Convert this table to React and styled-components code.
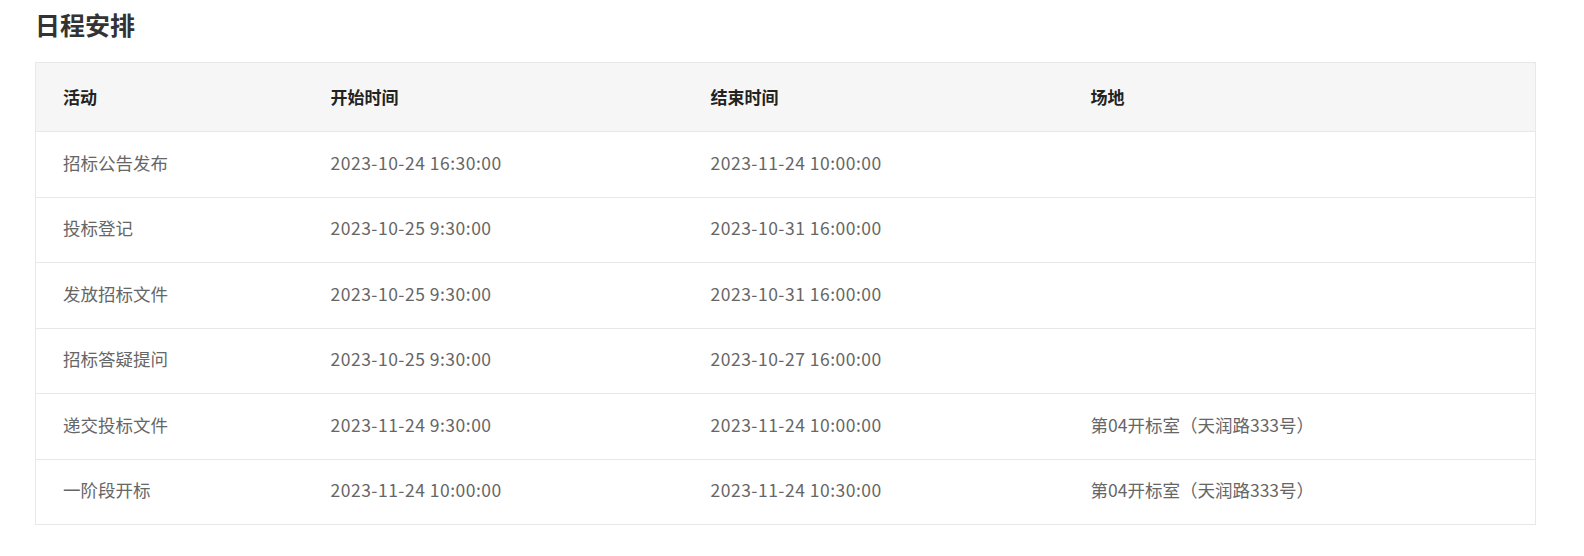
import React from "react";
import styled, { createGlobalStyle } from "styled-components";

const GlobalStyle = createGlobalStyle`
  html, body { margin: 0; padding: 0; background: #fff; }
  body { font-family: "Noto Sans CJK SC", "Noto Sans", sans-serif; }
`;

const Page = styled.div`
  padding: 9px 49px 0 35px;
`;

const Title = styled.h2`
  margin: 0 0 23px 0;
  font-size: 25px;
  line-height: 30px;
  font-weight: 700;
  color: #333;
`;

const Table = styled.table`
  width: 1500px;
  border-collapse: collapse;
  border: 1px solid #e8e8e8;
  table-layout: fixed;
`;

const Col = styled.col`
  width: ${(p) => p.$w}px;
`;

const Th = styled.th`
  background: #f6f6f6;
  height: 66px;
  padding: 0 0 2px 27px;
  text-align: left;
  font-size: 17px;
  font-weight: 700;
  color: #222;
`;

const Tr = styled.tr`
  border-top: 1px solid #e8e8e8;
`;

const Td = styled.td`
  height: 60.5px;
  padding: 0 0 4px 27px;
  font-size: 17.5px;
  letter-spacing: ${(p) => (p.$num ? "0.5px" : "0")};
  color: #666;
  vertical-align: middle;
`;

const rows = [
  ["招标公告发布", "2023-10-24 16:30:00", "2023-11-24 10:00:00", ""],
  ["投标登记", "2023-10-25 9:30:00", "2023-10-31 16:00:00", ""],
  ["发放招标文件", "2023-10-25 9:30:00", "2023-10-31 16:00:00", ""],
  ["招标答疑提问", "2023-10-25 9:30:00", "2023-10-27 16:00:00", ""],
  ["递交投标文件", "2023-11-24 9:30:00", "2023-11-24 10:00:00", "第04开标室（天润路333号）"],
  ["一阶段开标", "2023-11-24 10:00:00", "2023-11-24 10:30:00", "第04开标室（天润路333号）"],
];

export default function App() {
  return (
    <>
      <GlobalStyle />
      <Page>
        <Title>日程安排</Title>
        <Table>
          <colgroup>
            <Col $w={268} />
            <Col $w={380} />
            <Col $w={380} />
            <Col $w={472} />
          </colgroup>
          <thead>
            <tr>
              <Th>活动</Th>
              <Th>开始时间</Th>
              <Th>结束时间</Th>
              <Th>场地</Th>
            </tr>
          </thead>
          <tbody>
            {rows.map((r, i) => (
              <Tr key={i}>
                {r.map((c, j) => (
                  <Td key={j} $num={j === 1 || j === 2}>
                    {c}
                  </Td>
                ))}
              </Tr>
            ))}
          </tbody>
        </Table>
      </Page>
    </>
  );
}
